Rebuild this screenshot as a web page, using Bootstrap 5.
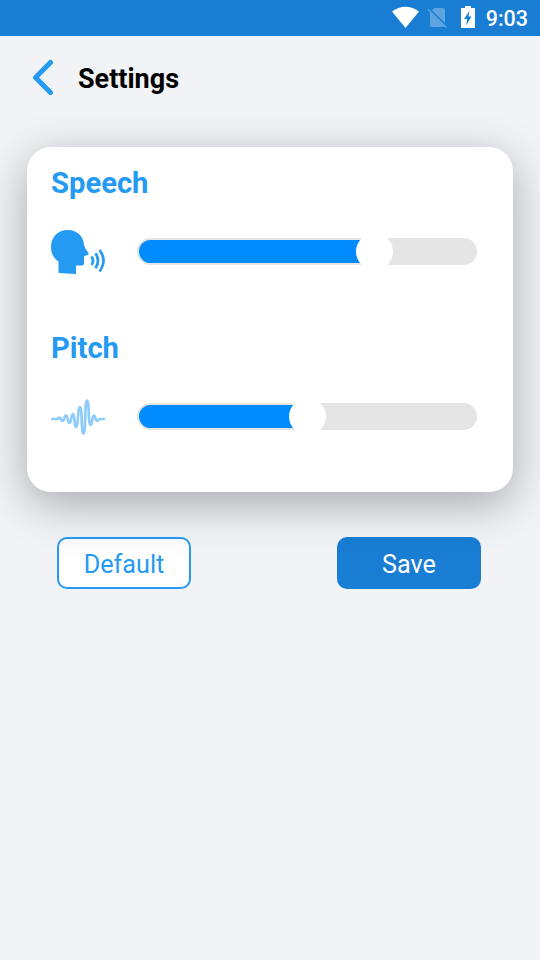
<!DOCTYPE html>
<html lang="en">
<head>
<meta charset="utf-8">
<meta name="viewport" content="width=device-width, initial-scale=1">
<title>Settings</title>
<link rel="stylesheet" href="https://cdn.jsdelivr.net/npm/bootstrap@5.3.0/dist/css/bootstrap.min.css">
<script src="https://cdn.jsdelivr.net/npm/bootstrap@5.3.0/dist/js/bootstrap.bundle.min.js" defer></script>
<style>
body{background:#f1f3f7;font-family:Roboto,"Liberation Sans",sans-serif;color:#000;height:960px;overflow:hidden}
svg{display:block;flex:none}
.status-bar{height:36px;background:#187dd3;padding-right:12px}
.status-icons{width:87px}
.clock{font-size:21.5px;font-weight:500;line-height:34px;padding:2px 0 0 11px}
.top-bar{height:111px;padding:22px 0 0 32px}
.screen-title{font-size:27px;line-height:40px;font-weight:700;margin:1px 0 0 24px}
.panel{margin:0 27px;height:345px;border:0;border-radius:24px;padding:0 24px;box-shadow:0 12px 45px rgba(0,0,0,.31)}
.setting{height:165px;padding-top:18px}
.setting h2{font-size:29.2px;line-height:36px;font-weight:700;color:#259af3;margin:0}
.control{height:54px;margin-top:23px;padding-right:12px}
.control svg{margin-top:2px}
.slider{position:relative;width:340px;height:27px;border-radius:14px;background:#e5e5e5;padding:2px;margin-left:32px}
.slider .progress-bar{background:#008cff;border-radius:12px 0 0 12px;transition:none}
.thumb{position:absolute;top:-5px;width:37px;height:37px;border-radius:50%;background:#fff;margin-left:-18.5px}
.actions{padding:45px 59px 0 57px}
.actions .btn{height:52px;padding:4px 0 0;font-size:25.2px;line-height:1;border-radius:10px}
.btn-default{width:134px;border:2px solid #259af3;color:#259af3;background:linear-gradient(#fbfbfb,#fff 50%)}
.btn-save{width:144px;background:#187dd3;color:#fff;border:0}
</style>
</head>
<body>
<header class="status-bar d-flex justify-content-end align-items-center text-white">
<svg class="status-icons" width="87" height="36" viewBox="388 0 87 36">
<path d="M392 11.500C400 5.200 411 5.200 419 11.500L405.500 28Z" fill="#fff"/>
<g fill="#5da4e0"><path d="M434.500 8H443Q445 8 445 10V23L432 10.300ZM430 11.500L445 26Q444 27 443 27H432Q430 27 430 25Z"/><path d="M428 9.500L446.500 27.500" stroke="#5da4e0" stroke-width="1.500"/></g>
<path d="M461 8H465V6H471V8H475V28H461Z" fill="#fff"/>
<path d="M469.500 11L464 19H467.200L466.200 25.500L471.500 16.500H468.500Z" fill="#187dd3"/>
</svg>
<span class="clock">9:03</span>
</header>
<div class="top-bar d-flex align-items-start">
<svg width="22" height="38" viewBox="0 0 22 38" fill="none" stroke="#259af3" stroke-width="5" stroke-linecap="round" stroke-linejoin="round"><path d="M18.500 4.500L3.500 19.500L18.500 34.500"/></svg>
<h1 class="screen-title">Settings</h1>
</div>
<main>
<section class="card panel">
<div class="setting">
<h2>Speech</h2>
<div class="control d-flex align-items-center">
<svg width="54" height="54" viewBox="0 0 54 54" fill="#259af3"><path d="M16.500 5C27 5 32.500 12 33 20Q34 24 37.500 28Q38.500 30 35 30.500Q33 30.500 33 32V38Q33 40.500 31 40.500H25V49L7.500 48V36.500C2.500 33 0 28 0 22C0 12 7 5 16.500 5Z"/><path d="M40.500 31.500Q43.500 35.500 40.500 40M44.500 28.200Q49.500 35.500 44.500 43.200M48.500 25Q56.500 35.500 48.500 46.500" fill="none" stroke="#259af3" stroke-width="2.700"/></svg>
<div class="slider progress"><div class="progress-bar" style="width:69%"></div><span class="thumb" style="left:69.86%"></span></div>
</div>
</div>
<div class="setting">
<h2>Pitch</h2>
<div class="control d-flex align-items-center">
<svg width="54" height="54" viewBox="0 0 54 54" fill="none" stroke="#8dcbfa" stroke-width="2.700" stroke-linecap="round" stroke-linejoin="round"><path d="M1 29H6C8 29 7 27.500 8.500 27.500C10 27.500 10 31 11.500 31C13.500 31 13 25.500 15 25.500C17 25.500 16.500 33 18.500 33C20.500 33 20 24 22 24C24 24 23 37 25 37C27.500 37 26.500 17 29 17C31.500 17 30 43.500 32.500 43.500C35 43.500 33.500 10.500 36 10.500C38.500 10.500 37 35 39.500 35C41.500 35 41 25.500 43 25.500C44.500 25.500 44.500 31 46 31C47.500 31 47 29 49 29H53"/></svg>
<div class="slider progress"><div class="progress-bar" style="width:49%"></div><span class="thumb" style="left:50%"></span></div>
</div>
</div>
</section>
<div class="actions d-flex justify-content-between">
<button class="btn btn-default" type="button">Default</button>
<button class="btn btn-save" type="button">Save</button>
</div>
</main>
</body>
</html>
